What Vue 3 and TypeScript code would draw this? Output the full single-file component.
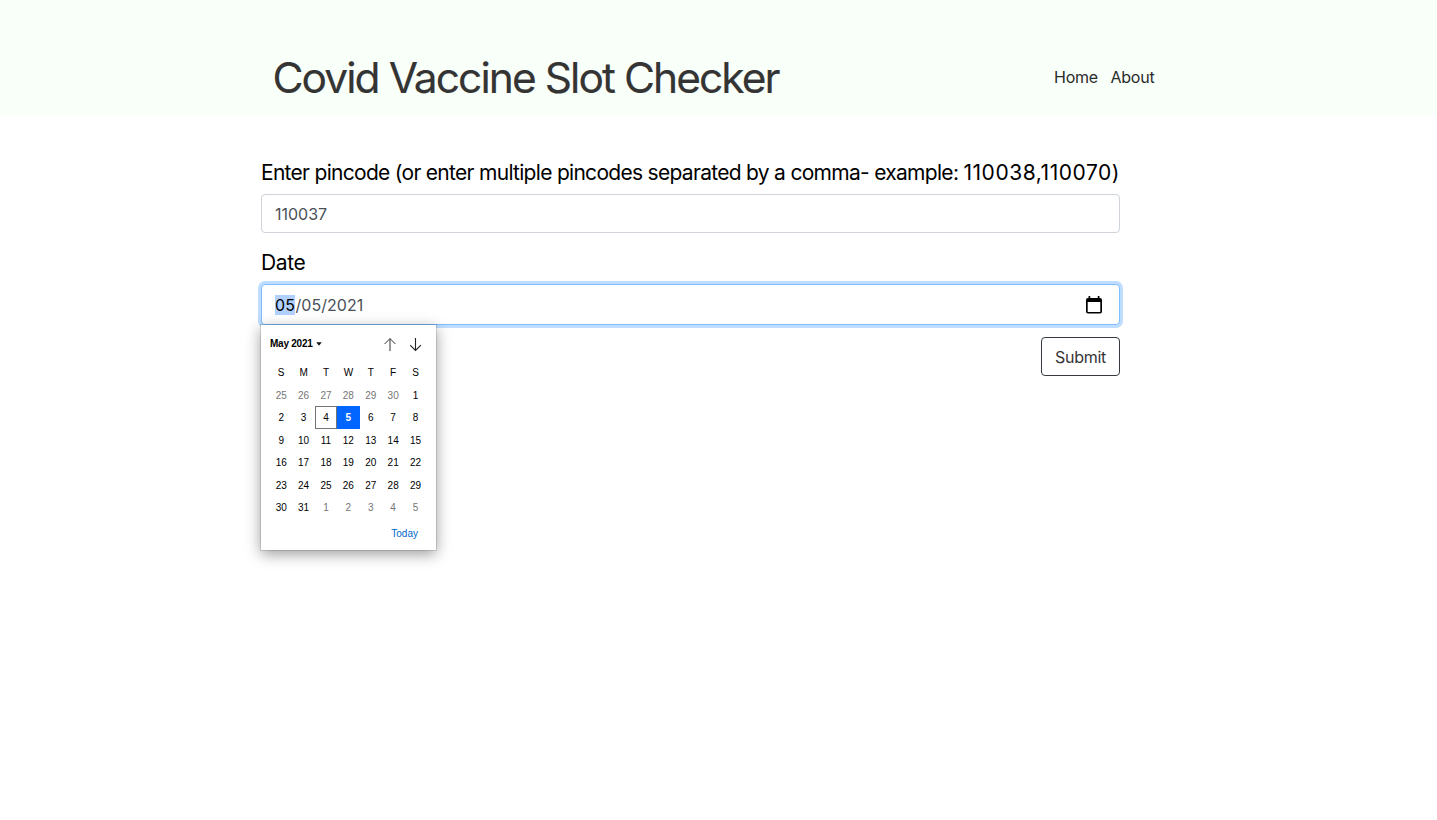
<script setup lang="ts">
import { ref } from 'vue'

interface Day {
  n: number
  muted: boolean
  today: boolean
  selected: boolean
}

const pincode = ref('110037')
const weekdays = ['S', 'M', 'T', 'W', 'T', 'F', 'S']

const first = new Date(2021, 3, 25)
const days: Day[] = Array.from({ length: 42 }, (_, i) => {
  const d = new Date(first.getFullYear(), first.getMonth(), first.getDate() + i)
  const inMonth = d.getMonth() === 4
  return {
    n: d.getDate(),
    muted: !inMonth,
    today: inMonth && d.getDate() === 4,
    selected: inMonth && d.getDate() === 5,
  }
})
</script>

<template>
  <div class="page">
    <header class="header">
      <h1 class="title">Covid Vaccine Slot Checker</h1>
      <nav class="nav">
        <a class="link">Home</a>
        <a class="link">About</a>
      </nav>
    </header>
    <main class="form">
      <label class="label" for="pin"><span class="long">Enter pincode (or enter multiple pincodes separated by a comma- example: </span><span class="codes">110038,110070)</span></label>
      <input id="pin" v-model="pincode" class="control" type="text" />
      <div class="label date-label"><span class="date-text">Date</span></div>
      <div class="control date">
        <span class="date-value"><span class="hl">05</span>/05/2021</span>
        <svg class="cal-icon" width="16" height="18" viewBox="0 0 16 18">
          <path d="M2 1.9H14A2 2 0 0 1 16 3.9V15.6A2 2 0 0 1 14 17.6H2A2 2 0 0 1 0 15.6V3.9A2 2 0 0 1 2 1.9ZM1.7 6V15.9H14.3V6Z" fill="#000" fill-rule="evenodd" />
          <path d="M3.4 0V3M12.6 0V3" stroke="#000" stroke-width="1.7" />
        </svg>
        <div class="popup">
          <div class="popup-head">
            <span class="month">May 2021</span>
            <svg class="caret" width="6" height="4" viewBox="0 0 6 4"><path d="M.3 .2H5.7L3 3.8Z" fill="#111" /></svg>
            <svg class="arrow up" width="12" height="14" viewBox="0 0 12 14"><path d="M6 13.1V.6M.6 6L6 .6L11.4 6" fill="none" stroke="#333" stroke-width="1" /></svg>
            <svg class="arrow" width="12" height="14" viewBox="0 0 12 14"><path d="M5.5 0V12.5M.1 7.1L5.5 12.5L10.9 7.1" fill="none" stroke="#222" stroke-width="1.1" /></svg>
          </div>
          <div class="grid">
            <span v-for="(w, i) in weekdays" :key="'w' + i" class="cell">{{ w }}</span>
            <span
              v-for="(d, i) in days"
              :key="i"
              class="cell"
              :class="{ muted: d.muted, today: d.today, selected: d.selected }"
            >{{ d.n }}</span>
          </div>
          <div class="foot">Today</div>
        </div>
      </div>
      <div class="actions"><button class="submit" type="button">Submit</button></div>
    </main>
  </div>
</template>

<style>
body {
  background: #fff;
}
</style>

<style scoped>
.page {
  height: 820px;
  overflow: hidden;
  font-family: Inter, "Liberation Sans", sans-serif;
  font-size: 16px;
  color: #000;
}
.header {
  box-sizing: border-box;
  height: 115px;
  padding: 40px 282.5px 0 272.5px;
  display: flex;
  justify-content: space-between;
  background: #f9fff9;
  color: #343434;
}
.title {
  margin: 0;
  font-size: 42.5px;
  font-weight: 400;
  line-height: 76px;
  letter-spacing: -1.95px;
  white-space: nowrap;
  -webkit-text-stroke: 0.15px #343434;
}
.nav {
  display: flex;
  gap: 12.5px;
  line-height: 75px;
  color: #292b2c;
}
.link {
  letter-spacing: -0.22px;
}
.form {
  width: 859px;
  margin-left: 261px;
  padding-top: 42px;
}
.label {
  display: block;
  height: 37px;
  line-height: 32px;
  font-size: 21px;
  white-space: nowrap;
}
.long {
  letter-spacing: -0.705px;
}
.codes {
  letter-spacing: 0.55px;
}
.date-text {
  letter-spacing: -0.4px;
}
.date-label {
  margin-top: 14px;
}
.control {
  display: block;
  box-sizing: border-box;
  width: 859px;
  height: 39px;
  padding: 0 13px;
  border: 1px solid #ced4da;
  border-radius: 4px;
  background: #fff;
  color: #495057;
  font-family: inherit;
  font-size: 16px;
  outline: none;
}
.date {
  position: relative;
  display: flex;
  justify-content: space-between;
  align-items: center;
  height: 41px;
  padding-right: 17px;
  border-color: #80bdff;
  box-shadow: 0 0 0 3px #bfdeff;
}
.date-value {
  letter-spacing: 0.05px;
}
.hl {
  padding-right: 0.5px;
  background: #b0d1ff;
  color: #000;
}
.popup {
  position: absolute;
  left: -1px;
  top: 40px;
  box-sizing: border-box;
  width: 175px;
  height: 225px;
  padding: 0 9px;
  background: #fff;
  box-shadow: 0 0 0 1px rgba(0, 0, 0, 0.12), 0 4px 14px rgba(0, 0, 0, 0.4);
  color: #000;
  font-family: "Liberation Sans", Arial, sans-serif;
  font-size: 10px;
}
.popup-head {
  display: flex;
  align-items: center;
  height: 36.4px;
}
.month {
  letter-spacing: -0.24px;
  font-weight: 700;
}
.caret {
  margin-left: 3px;
  margin-top: 2px;
}
.arrow {
  margin: 3px 5.5px 0 0;
}
.up {
  margin-left: auto;
  margin-right: 13.5px;
}
.grid {
  display: grid;
  grid-template-columns: repeat(7, 22.4px);
  grid-auto-rows: 22.5px;
}
.cell {
  box-sizing: border-box;
  display: flex;
  align-items: center;
  justify-content: center;
}
.muted {
  color: #757575;
}
.today {
  border: 1px solid #757575;
}
.selected {
  background: #0066ff;
  color: #fff;
  font-weight: 700;
}
.foot {
  padding: 9px 9px 0 0;
  text-align: right;
  color: #0066cc;
}
.actions {
  display: flex;
  justify-content: flex-end;
  padding-top: 12px;
}
.submit {
  box-sizing: border-box;
  width: 79px;
  height: 39px;
  padding: 0;
  border: 1px solid #343a40;
  border-radius: 4px;
  background: #fff;
  color: #343434;
  font-family: inherit;
  font-size: 16px;
  letter-spacing: -0.25px;
}
</style>
